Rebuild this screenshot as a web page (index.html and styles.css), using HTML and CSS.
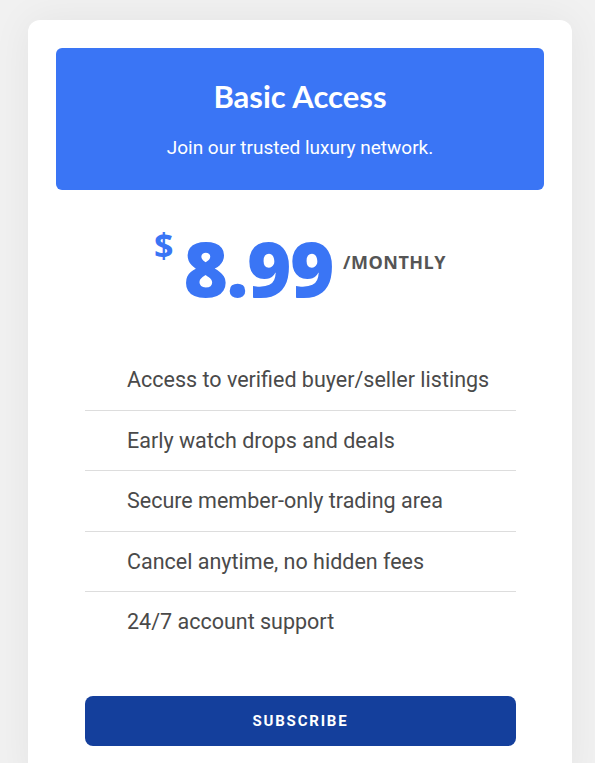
FILE: index.html
```html
<!DOCTYPE html>
<html>
<head>
<meta charset="utf-8">
<link rel="stylesheet" href="styles.css">
</head>
<body>
<div class="card">
  <div class="head">
    <h1 class="title">Basic Access</h1>
    <p class="sub">Join our trusted luxury network.</p>
  </div>
  <div class="price">
    <span class="cur">$</span>
    <span class="amount">8.99</span>
    <span class="per">/MONTHLY</span>
  </div>
  <ul class="features">
    <li>Access to verified buyer/seller listings</li>
    <li>Early watch drops and deals</li>
    <li>Secure member-only trading area</li>
    <li>Cancel anytime, no hidden fees</li>
    <li>24/7 account support</li>
  </ul>
  <button class="btn">SUBSCRIBE</button>
</div>
</body>
</html>
```
FILE: styles.css
```css
html, body { margin: 0; padding: 0; }
body {
  background: #f1f1f1;
  font-family: Roboto, "Liberation Sans", sans-serif;
  padding: 20px 23px 0 28px;
  height: 743px;
  overflow: hidden;
}
.card {
  background: #fff;
  border-radius: 12px;
  padding: 28px 28px 40px;
  box-shadow: 0 0 40px rgba(0,0,0,0.06);
}
.head {
  background: #3a75f5;
  border-radius: 6px;
  color: #fff;
  text-align: center;
  height: 142px;
  box-sizing: border-box;
  padding-top: 30px;
}
.title {
  margin: 0;
  font-family: Lato, sans-serif;
  font-weight: 700;
  font-size: 31px;
  line-height: 36px;
}
.sub {
  margin: 24px 0 0;
  font-size: 19px;
  line-height: 20px;
}
.price {
  display: flex;
  justify-content: center;
  align-items: flex-start;
  color: #3a75f5;
  margin-top: 40px;
  height: 120px;
}
.cur {
  font-family: "Open Sans", sans-serif;
  font-weight: 700;
  font-size: 34px;
  line-height: 34px;
  margin-top: -2px;
  margin-right: 10px;
}
.amount {
  font-family: "Open Sans", sans-serif;
  font-weight: 800;
  font-size: 76px;
  line-height: 76px;
  letter-spacing: -1.5px;
}
.per {
  font-family: "Open Sans", sans-serif;
  font-weight: 700;
  font-size: 18px;
  line-height: 18px;
  letter-spacing: 0.5px;
  color: #555;
  margin-top: 23px;
  margin-left: 10px;
}
.features {
  list-style: none;
  margin: 0 28px 0 29px;
  padding: 0;
}
.features li {
  font-size: 21.5px;
  color: #4a4a4a;
  padding-left: 42px;
  height: 60.5px;
  line-height: 60px;
  box-sizing: border-box;
  border-bottom: 1px solid #ddd;
}
.features li:last-child { border-bottom: none; }
.btn {
  display: block;
  width: 100%;
  margin: 43px 0 0;
  margin-left: 29px;
  width: calc(100% - 57px);
  height: 50px;
  border: none;
  border-radius: 8px;
  background: #143f9c;
  color: #fff;
  font-family: Roboto, sans-serif;
  font-weight: 700;
  font-size: 15px;
  letter-spacing: 1.8px;
}
```
